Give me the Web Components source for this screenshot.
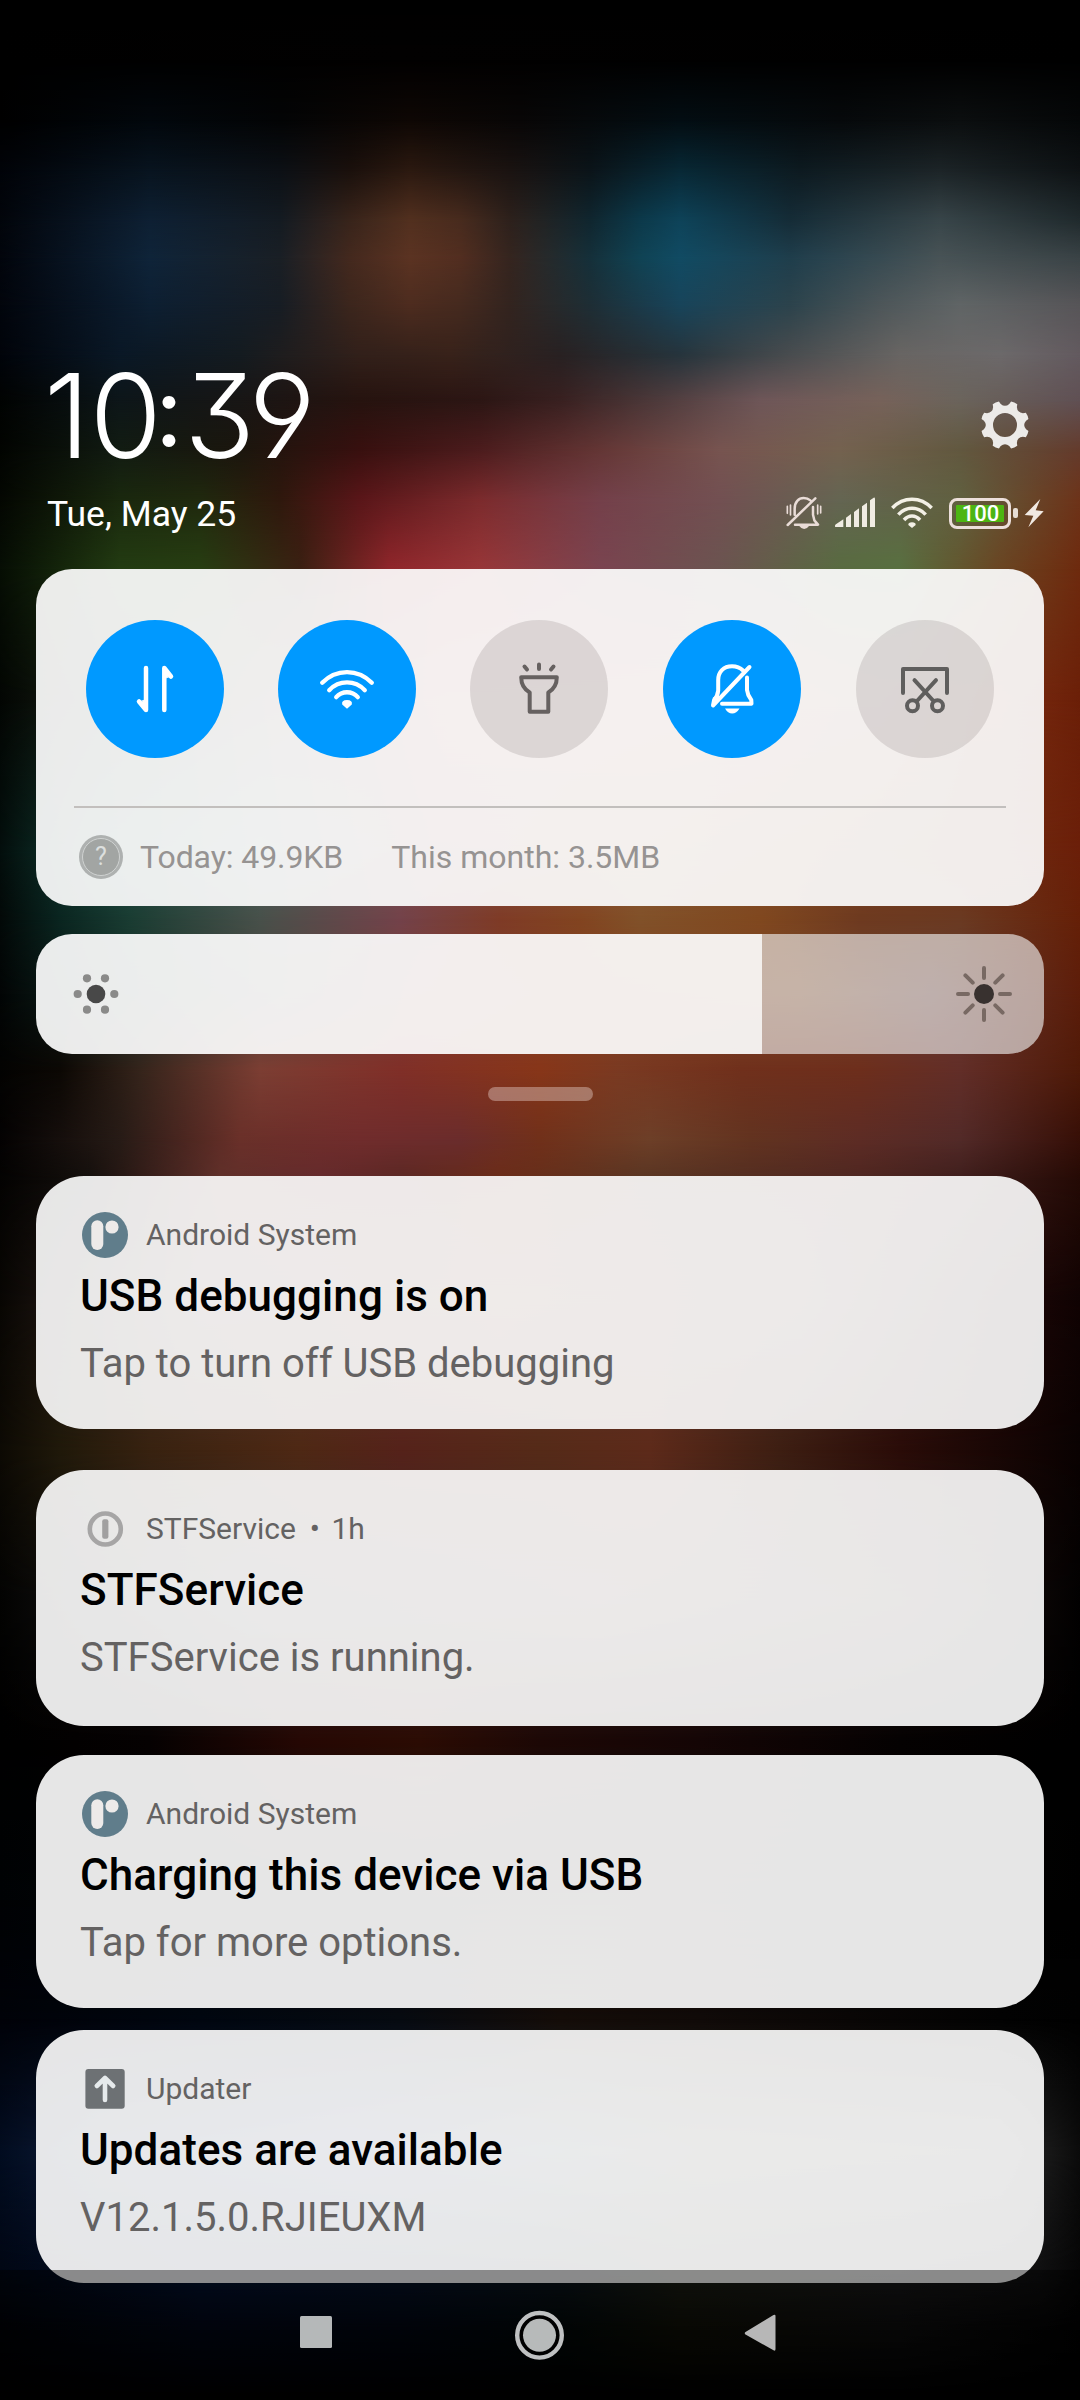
<!DOCTYPE html>
<html lang="en">
<head>
<meta charset="utf-8">
<title>Notification shade</title>
<style>
html,body{margin:0;padding:0;background:#000}
body{width:1080px;height:2400px;overflow:hidden;font-family:Roboto,"Liberation Sans",sans-serif}
</style>
</head>
<body>
<shade-screen></shade-screen>
<script>
const define=(name,html,setup)=>customElements.define(name,class extends HTMLElement{
  connectedCallback(){
    if(this.shadowRoot)return;
    const root=this.attachShadow({mode:'open'});
    root.innerHTML=html;
    if(setup)setup.call(this,root);
  }
});

/* Blurred home screen: colour samples per scan line, blended between lines. */
const SCENE=[
[0,'0 #000,1080 #000'],
[60,'0 #000,400 #020101,1080 #000'],
[120,'0 #000,150 #02070c,280 #030405,410 #0e0704,520 #080606,680 #030d12,840 #06090b,960 #0b0e0f,1080 #050708'],
[170,'0 #010308,150 #08141f,280 #0c1015,350 #1a100c,410 #2b1910,510 #1a1311,590 #0b1419,680 #082835,800 #0d1a20,940 #1c2427,1080 #0e1214'],
[220,'0 #02050b,150 #0e2033,280 #141b22,350 #38241b,410 #52301f,460 #482b1e,510 #2d211c,590 #10262f,640 #0c394a,680 #0e4359,790 #152c37,940 #384549,1080 #202a2d'],
[258,'0 #02050c,150 #0f2439,280 #1a1f25,350 #44291e,410 #5b3322,460 #522e20,510 #35251f,590 #15303a,640 #104354,680 #114b63,790 #1f3e4c,940 #485356,1080 #3a4346'],
[305,'0 #02050c,150 #0d1f32,280 #171d24,350 #3c261d,410 #4d2c1f,460 #452a1f,510 #33241f,590 #1e2e35,680 #18445a,790 #2c434c,880 #4d5659,960 #606566,1080 #575558'],
[355,'0 #01040a,120 #0a1826,240 #141b20,360 #32201a,450 #38221a,560 #282122,680 #26343c,780 #464a4d,900 #686563,1000 #6c696a,1080 #635a5f'],
[400,'0 #010302,120 #0d1619,240 #181615,360 #26130f,480 #2c1614,560 #382020,660 #4e3b3c,760 #6e5658,880 #76625a,960 #6b645c,1080 #605054'],
[450,'0 #020401,120 #121c12,240 #1b160d,360 #38100f,480 #4c1c1d,600 #643635,720 #775450,840 #74624f,960 #62583f,1080 #643b2c'],
[500,'0 #040702,120 #1a280e,200 #20290e,280 #2f180d,360 #5a1619,480 #7c2b2d,600 #74404a,720 #725052,840 #646552,960 #606040,1080 #6d3319'],
[569,'0 #060e04,120 #233c12,200 #273e12,300 #3a2012,390 #90262b,480 #983638,600 #7a4450,720 #6b5450,840 #586b40,900 #587040,1000 #6a4522,1080 #6e2a0e'],
[700,'0 #030603,150 #263020,300 #5f4440,450 #a05350,700 #a05348,880 #80523c,1000 #7c2d12,1080 #6b1f08'],
[850,'0 #030e0c,100 #15463c,260 #48625c,430 #854c4c,640 #8a5836,860 #78401e,1080 #6b1f09'],
[920,'0 #030908,60 #0a2520,130 #1a3c32,260 #48504a,400 #73424a,500 #7e3b26,580 #824420,640 #815129,760 #80481f,860 #6e3a20,960 #6a3a22,1080 #652008'],
[994,'0 #020505,120 #143028,280 #4f463e,420 #803d36,600 #844020,800 #7d4a2a,930 #684038,1080 #5c1d0a'],
[1070,'0 #030302,60 #0c0804,140 #35241b,260 #7c3e33,400 #802f28,540 #873619,620 #7a3a22,740 #70301c,860 #6d2e1c,960 #622e28,1080 #4f1a08'],
[1140,'0 #040202,120 #271b16,240 #6a3029,360 #702c2c,460 #6a2c2c,540 #70301a,650 #6d3f28,750 #623320,860 #5d2c25,960 #522a28,1080 #360f07'],
[1180,'0 #040302,90 #15100d,220 #60302a,320 #652a2c,400 #5b2824,500 #6b2c18,640 #593522,860 #4e2620,960 #3f1e1c,1080 #240a05'],
[1300,'0 #080603,200 #503833,500 #6a3a28,800 #50332c,1000 #200808,1080 #100303'],
[1450,'0 #0d0a04,60 #20190a,150 #382210,300 #4e2814,400 #55221a,540 #552a18,650 #5d2a1a,780 #3d1e12,900 #2a0c08,1080 #0a0202'],
[1600,'0 #030302,250 #302c2c,600 #442c24,900 #2a1814,1080 #020101'],
[1740,'0 #000,150 #060202,300 #260804,420 #2c0c04,540 #1d0806,700 #150606,900 #050202,1080 #000'],
[1900,'0 #000204,300 #060a0a,600 #100c0a,1080 #000'],
[2019,'0 #000208,200 #00060f,400 #060a10,560 #140c08,700 #100a08,1000 #020202,1080 #010101'],
[2150,'0 #020c20,100 #10203c,350 #202c5c,560 #2c3c44,700 #34342c,1000 #2c2c2c,1080 #0b0b0b'],
[2269,'0 #010714,200 #041230,400 #061328,560 #0b141c,680 #1b1e16,900 #181819,1040 #101011,1080 #060606'],
[2330,'0 #010306,200 #020714,400 #020610,560 #020808,680 #0e0e06,900 #0c0c0c,1080 #020202'],
[2400,'0 #000,1080 #000']];

define('blurred-wallpaper',`<style>
:host{position:absolute;inset:0;display:flex;flex-direction:column;overflow:hidden}
.band{flex:none;display:grid}
.band>*{grid-area:1/1}
.lower{-webkit-mask-image:linear-gradient(transparent,#000);mask-image:linear-gradient(transparent,#000)}
</style>`,function(root){
  const line=s=>'linear-gradient(90deg,'+s.split(',').map(p=>{const[x,c]=p.split(' ');return c+' '+x+'px'}).join(',')+')';
  for(let i=0;i<SCENE.length-1;i++){
    const band=document.createElement('div');band.className='band';
    band.style.height=(SCENE[i+1][0]-SCENE[i][0])+'px';
    const upper=document.createElement('div'),lower=document.createElement('div');
    lower.className='lower';
    upper.style.background=line(SCENE[i][1]);
    lower.style.background=line(SCENE[i+1][1]);
    band.append(upper,lower);root.append(band);
  }
});

define('battery-badge',`<style>
:host{display:flex;align-items:center;gap:2px;width:69px}
.case{box-sizing:border-box;width:62px;height:31px;border:3.3px solid #ecdfdb;border-radius:8px;padding:4px;display:flex}
.level{flex:1;background:#4db512;color:#fff;display:flex;align-items:center;justify-content:center;font:500 22px/16px Roboto,sans-serif;border-radius:1px}
.level span{margin:1px -4px 0 -3px}
.tip{width:4.6px;height:10px;border-radius:2px;background:#e6ddd4}
</style><div class="case"><div class="level"><span><slot></slot></span></div></div><div class="tip"></div>`);

define('status-icons',`<style>
:host{display:flex;align-items:center;height:40px}
svg{display:block;height:40px;flex:none}
.signal{margin-left:12px}.wifi{margin-left:14px}battery-badge{margin:0 0 2px 15px}.bolt{margin-left:6px}
</style>
<svg width="36" viewBox="78 342 108 120" fill="none" stroke="#e9dcd7" stroke-width="7.5" stroke-linecap="round" stroke-linejoin="round">
<path d="M104 404V386C104 366 116 354 131 354Q143 354 151 361M83 435L166 355M159 381V404L163 421L174 434H105"/>
<path d="M118 438h29q-6 9-14.500 9T118 438Z" fill="#e9dcd7" stroke="none"/>
<path d="M82 379V400M91.500 375V405M173 375V402M182 379V399" stroke-width="5"/></svg>
<svg class="signal" width="42" viewBox="222 342 126 120" fill="#f0ece3">
<path d="M226 441Q222 436 230 431L250 418V441ZM258 413L273 402V441H258ZM282 396L297 385V441H282ZM306 379L321 368V441H306ZM330 361L341 353Q345 352 345 357V441H330Z"/></svg>
<svg class="wifi" width="44" viewBox="390 342 132 120" fill="none" stroke="#f3f0e6" stroke-width="10.500">
<path d="M397 384C430 349 482 349 515 384M415 404C438 378 474 378 497 404M432 420C446 404 466 404 480 420"/>
<path d="M456 444L445 435Q444 427 456 427T467 435Z" fill="#f3f0e6" stroke="none"/></svg>
<battery-badge>100</battery-badge>
<svg class="bolt" width="20" viewBox="792 342 60 120" fill="#f1e9e2"><path d="M841 357L794 405L820 407L805 442L851 394L827 391Z"/></svg>`);

define('shade-header',`<style>
:host{display:block;box-sizing:border-box;height:569px;padding:366px 36px 0 47px;color:#fff}
.row{display:flex;justify-content:space-between}
.top{height:99px;padding-right:15px}
.clock{font:300 116.500px/100px Inter,sans-serif;font-feature-settings:"cv09","cv04","ss01";white-space:nowrap;letter-spacing:-6.500px;margin-left:-3px}
.gear{margin-top:35px;width:48px;height:48px;display:block}
.bottom{margin-top:29px;height:40px}
.date{font:400 35.500px/40px Roboto,sans-serif;white-space:nowrap}
</style>
<div class="row top"><div class="clock"><slot name="time"></slot></div>
<svg class="gear" viewBox="-24 -24 48 48"><path id="g" fill="#eceae8" fill-rule="evenodd"/></svg></div>
<div class="row bottom"><div class="date"><slot name="date"></slot></div><status-icons></status-icons></div>`,function(root){
  const at=(r,a)=>{a*=Math.PI/180;return(r*Math.cos(a)).toFixed(2)+' '+(r*Math.sin(a)).toFixed(2)};
  let d='';
  for(let k=0;k<8;k++){const a=k*45+22.5;
    d+=(k?'L':'M')+at(24.2,a-8)+'Q'+at(24.8,a)+' '+at(24.2,a+8)+'L'+at(21.5,a+11)+'Q'+at(17.3,a+22.5)+' '+at(21.5,a+34);}
  d+='ZM12 0A12 12 0 1 0-12 0A12 12 0 1 0 12 0Z';
  root.getElementById('g').setAttribute('d',d);
});

const TOGGLES={
data:'<g fill="none" stroke="#fff" stroke-width="4.500" stroke-linecap="round" stroke-linejoin="round"><path d="M-9-21V21L-16 12.500"/><path d="M-9 11V21L-15 13Z" fill="#fff" stroke-width="1"/><path d="M9.300 21V-21L16-12.500"/><path d="M9.300-11V-21L15.500-13Z" fill="#fff" stroke-width="1"/></g>',
wifi:'<g fill="none" stroke="#fff" stroke-width="4.300" stroke-linecap="round"><path d="M-24.800-6.200C-11-20.500 11-20.500 24.800-6.200M-17.800 1.200C-8-9.200 8-9.200 17.800 1.200M-10.800 8.200C-5 1.600 5 1.600 10.800 8.200"/><path d="M0 19.800L-4.800 15.600Q-5.800 11 0 11T4.800 15.600Z" fill="#fff" stroke="none"/></g>',
torch:'<g fill="none" stroke="#666160" stroke-width="4" stroke-linecap="round" stroke-linejoin="round"><path d="M0-24.500V-20M-14.500-22.500L-12-19.500M14.500-22.500L12-19.500M-17.800-11.700H17.800C17.800-4.500 14.500 0.500 9.300 3.500V22.800H-9.300V3.500C-14.500 0.500-17.800-4.500-17.800-11.700Z"/></g>',
mute:'<g fill="none" stroke="#fff" stroke-width="4" stroke-linecap="round" stroke-linejoin="round"><path d="M11-18.500C8-21.500 4.500-22.700 0-22.700C-8.500-22.700-13.800-17-13.800-9V1.500Q-14.200 6.500-18 11.500L-19 16.500L17.500-22M15-11.500V1Q15.500 6 19.300 11L19.500 14.700H-10" /><path d="M-19.500 16.500L-18.500 9L-14 6L-13 10Z" fill="#fff" stroke-width="1.500"/><path d="M-7 19.500H7.500Q4.500 24.500 0.200 24.500T-7 19.500Z" fill="#fff" stroke="none"/></g>',
shot:'<g fill="none" stroke="#5f5e5d" stroke-width="4" stroke-linecap="round" stroke-linejoin="round"><path d="M-22 4V-20H22V4M-10.500-8.800L8.500 12M11-8.800L-8 12"/><circle cx="-12.500" cy="16.700" r="5.500"/><circle cx="12.500" cy="16.700" r="5.500"/></g>'
};
define('quick-toggle',`<style>
:host{display:block;width:138px;height:138px;border-radius:50%;background:rgba(100,90,90,.17)}
:host([on]){background:#0099ff}
svg{display:block;width:138px;height:138px}
</style><svg viewBox="-69 -69 138 138"></svg>`,function(root){
  root.querySelector('svg').innerHTML=TOGGLES[this.getAttribute('icon')];
});

define('data-usage',`<style>
:host{display:flex;align-items:center;flex:1;padding-left:43px;font:400 32px/36px Roboto,sans-serif;color:#969392}
.help{box-sizing:border-box;width:44px;height:44px;border-radius:50%;background:#aeb1b0;padding:3px;margin-right:17px}
.help div{box-sizing:border-box;width:38px;height:38px;border-radius:50%;border:1.500px solid #cfd2d1;background:#a2a5a3;color:#dcdfde;text-align:center;font:400 25px/36px Roboto,sans-serif}
::slotted(span){white-space:nowrap}
::slotted(span:first-child){letter-spacing:-.08px}
::slotted(span:last-child){margin-left:48px}
</style><div class="help"><div>?</div></div><slot></slot>`);

define('quick-settings',`<style>
:host{box-sizing:border-box;display:flex;flex-direction:column;height:337px;margin:0 36px;border-radius:36px;background:rgba(252,252,252,.93)}
.tiles{display:grid;grid-template-columns:192px 192px 193px 193px 138px;padding:51px 50px 48px}
.rule{height:2px;margin:0 38px;background:#c2bfbd}
</style><div class="tiles"><slot></slot></div><div class="rule"></div><slot name="usage"></slot>`);

define('brightness-slider',`<style>
:host{display:flex;height:120px;margin:28px 36px 0;border-radius:36px;overflow:hidden}
.on{width:726px;background:rgba(252,252,252,.93);display:flex;align-items:center}
.off{flex:1;background:rgba(240,240,240,.64);display:flex;align-items:center;justify-content:flex-end}
svg{display:block;width:60px;height:60px}
.on svg{margin-left:30px}.off svg{margin-right:30px}
</style><div class="on"><svg viewBox="-30 -30 60 60"><circle r="9.300" fill="#484848"/><g fill="#8a8a89"><circle cx="-18.300" r="4.100"/><circle cx="18.300" r="4.100"/><circle cx="-9" cy="-15.700" r="4.100"/><circle cx="9" cy="-15.700" r="4.100"/><circle cx="-9" cy="15.700" r="4.100"/><circle cx="9" cy="15.700" r="4.100"/></g></svg></div>
<div class="off"><svg viewBox="-30 -30 60 60"><circle r="10" fill="#38312f"/><path d="M0-16V-26M0 16V26M-16 0H-26M16 0H26M-11.300-11.300L-18.600-18.600M11.300-11.300L18.600-18.600M-11.300 11.300L-18.600 18.600M11.300 11.300L18.600 18.600" stroke="#786963" stroke-width="4" stroke-linecap="round"/></svg></div>`);

define('drag-handle',`<style>
:host{display:block;width:105px;height:14px;border-radius:7px;background:rgba(230,210,205,.42);margin:33px auto 75px}
</style>`);

const APPS={
system:'<circle cx="23" cy="23" r="23" fill="#607d8b"/><path d="M9.300 14.300a6 6 0 0 1 12 0v17.700a6 6 0 0 1-12 0z" fill="#edeae9"/><circle cx="30" cy="15" r="6.600" fill="#edeae9"/>',
stf:'<circle cx="23.300" cy="23" r="15.500" fill="none" stroke="#a6a5a5" stroke-width="4.600"/><rect x="20.200" y="13.200" width="6.200" height="19.600" rx="2" fill="#a1a0a0"/>',
updater:'<rect x="3.400" y="3" width="39.300" height="39.700" rx="3" fill="#6d7174"/><path d="M23 34V13M14.800 20L23 12L31.200 20" fill="none" stroke="#e6eaec" stroke-width="4.600" stroke-linecap="round" stroke-linejoin="round"/>'
};
define('notification-card',`<style>
:host{box-sizing:border-box;display:block;height:253px;margin:0 36px;padding:36px 44px 0;border-radius:48px;background:rgba(252,252,252,.915)}
.app{display:flex;align-items:center;height:46px;font:400 30px/46px Roboto,sans-serif;color:#646262;white-space:nowrap}
svg{display:block;width:46px;height:46px;margin:0 18px 0 2px}
.title{font:500 44px/50px Roboto,sans-serif;letter-spacing:.05px;color:#000;margin-top:13px;height:50px;white-space:nowrap}
.body{font:400 40px/46px Roboto,sans-serif;color:#646262;margin-top:20px;white-space:nowrap}
</style><div class="app"><svg viewBox="0 0 46 46"></svg><slot name="app"></slot></div>
<div class="title"><slot name="title"></slot></div><div class="body"><slot></slot></div>`,function(root){
  root.querySelector('svg').innerHTML=APPS[this.getAttribute('icon')];
});

define('nav-bar',`<style>
:host{position:absolute;left:0;right:0;bottom:0;height:130px;display:flex;box-sizing:border-box;padding-left:300px;background:rgba(0,0,0,.4)}
svg{display:block;height:130px}
.home{margin-left:183px}.back{margin-left:180px}
</style>
<svg width="32" viewBox="0 0 32 130"><rect y="46" width="32" height="32" rx="1.500" fill="#b5b8b9"/></svg>
<svg class="home" width="49" viewBox="0 0 49 130"><circle cx="24.500" cy="65.300" r="24.500" fill="#000"/><circle cx="24.500" cy="65.300" r="22.300" fill="none" stroke="#bfc1c2" stroke-width="4.400"/><circle cx="24.500" cy="65.300" r="16.500" fill="#b7baba"/></svg>
<svg class="back" width="32" viewBox="0 0 32 130"><path d="M1.500 62L29.500 45Q31.500 44 31.500 46V79Q31.500 81.500 29.500 80.300L1.500 64.500Q0 63.200 1.500 62Z" fill="#b7b7b7"/></svg>`);

define('shade-screen',`<style>
:host{display:block;position:relative;width:1080px;height:2400px;overflow:hidden}
main{position:relative;display:flow-root}
.one{letter-spacing:0}
.zero{letter-spacing:-8px}
.colon{display:inline-block;width:30.500px;text-align:center;letter-spacing:0;font-size:97px;font-weight:400;line-height:1;transform:translateY(-12.500px)}
.n2{margin-top:41px;height:256px}.n3{margin-top:29px}.n4{margin-top:22px}
.dot{margin:0 4px 0 6.500px}
</style>
<blurred-wallpaper></blurred-wallpaper>
<main>
<shade-header><span slot="time"><span class="one">1</span><span class="zero">0</span><span class="colon">:</span>39</span><span slot="date">Tue, May 25</span></shade-header>
<quick-settings>
<quick-toggle icon="data" on></quick-toggle><quick-toggle icon="wifi" on></quick-toggle><quick-toggle icon="torch"></quick-toggle><quick-toggle icon="mute" on></quick-toggle><quick-toggle icon="shot"></quick-toggle>
<data-usage slot="usage"><span>Today: 49.9KB</span><span>This month: 3.5MB</span></data-usage>
</quick-settings>
<brightness-slider></brightness-slider>
<drag-handle></drag-handle>
<notification-card icon="system"><span slot="app">Android System</span><span slot="title">USB debugging is on</span><span>Tap to turn off USB debugging</span></notification-card>
<notification-card class="n2" icon="stf"><span slot="app">STFService<span class="dot"> • </span>1h</span><span slot="title">STFService</span><span>STFService is running.</span></notification-card>
<notification-card class="n3" icon="system"><span slot="app">Android System</span><span slot="title">Charging this device via USB</span><span>Tap for more options.</span></notification-card>
<notification-card class="n4" icon="updater"><span slot="app">Updater</span><span slot="title">Updates are available</span><span>V12.1.5.0.RJIEUXM</span></notification-card>
</main>
<nav-bar></nav-bar>`);
</script>
</body>
</html>
